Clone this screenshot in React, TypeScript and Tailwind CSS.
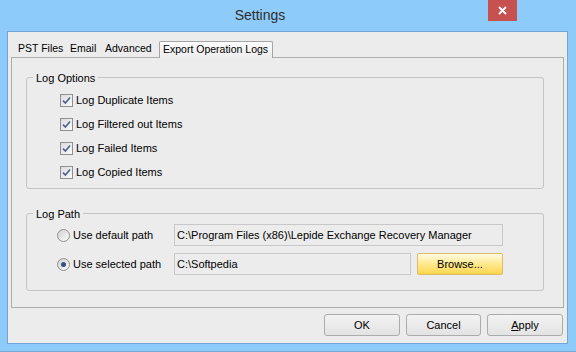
import { useState } from "react";

const CheckBox = ({ label }: { label: string }) => (
  <div className="flex items-center h-[24px]">
    <div className="w-[13px] h-[13px] border border-[#8f8f8f] bg-gradient-to-br from-[#dcdcdc] to-[#fafafa] flex items-center justify-center">
      <svg width="9" height="9" viewBox="0 0 9 9">
        <path d="M1 4.6 L3.4 7 L8 1.5" fill="none" stroke="#4c6190" strokeWidth="1.6" />
      </svg>
    </div>
    <span className="ml-[3px]">{label}</span>
  </div>
);

const Radio = ({ checked }: { checked: boolean }) => (
  <div className="w-[13px] h-[13px] rounded-full border border-[#8f8f8f] bg-gradient-to-br from-[#d2d2d2] to-[#fbfbfb] flex items-center justify-center">
    {checked && <div className="w-[5px] h-[5px] rounded-full bg-[#3a4e7c]" />}
  </div>
);

const Button = ({ children, w }: { children: React.ReactNode; w: string }) => (
  <div
    className={`${w} h-[22px] rounded-[3px] border border-[#acacac] bg-gradient-to-b from-[#f2f2f2] to-[#e3e3e3] flex items-center justify-center`}
  >
    {children}
  </div>
);

export default function App() {
  const [tab] = useState("Export Operation Logs");
  const tabs = [
    { name: "PST Files", w: "w-[52px]" },
    { name: "Email", w: "w-[35px]" },
    { name: "Advanced", w: "w-[55px]" },
    { name: "Export Operation Logs", w: "w-[114px]" },
  ];

  return (
    <div className="w-[576px] h-[352px] bg-[#8dcbfa] border-b border-[#74a9d8] flex flex-col font-['Liberation_Sans',sans-serif] text-[11px] text-black overflow-hidden">
      {/* Title bar */}
      <div className="h-[31px] flex relative">
        <div className="w-[520px] flex items-center justify-center text-[14px] text-[#2e2e2e] pb-[1px]">Settings</div>
        <div className="absolute right-[59px] top-0 w-[29px] h-[21px] bg-[#c75050] flex items-center justify-center">
          <svg width="9" height="9" viewBox="0 0 9 9">
            <path d="M1 1 L8 8 M8 1 L1 8" stroke="#fff" strokeWidth="1.8" />
          </svg>
        </div>
      </div>

      {/* Client area */}
      <div className="ml-[7px] mr-[8px] mb-[7px] flex-1 border border-[#72a6d6] bg-[#ececec] flex flex-col">
        {/* Tabs */}
        <div className="flex items-end pt-[9px] pl-[9px] text-[10.5px] whitespace-nowrap">
          {tabs.map((t) =>
            t.name === tab ? (
              <div
                key={t.name}
                className={`${t.w} h-[17px] -mb-px relative z-10 border border-b-0 border-[#a5a5a5] rounded-t-[2px] bg-gradient-to-b from-[#fdfdfd] to-[#ececec] flex items-center pl-[3px]`}
              >
                {t.name}
              </div>
            ) : (
              <div key={t.name} className={`${t.w} h-[16px] flex items-center pl-[1px]`}>
                {t.name}
              </div>
            )
          )}
        </div>

        {/* Tab panel */}
        <div className="mx-[3px] h-[251px] border border-[#adadad] bg-[#ececec] flex flex-col pl-[14px] pr-[19px]">
          {/* Log Options */}
          <div className="relative mt-[19px] h-[112px] border border-[#c4c4c4] rounded-[3px] pl-[33px] pt-[10px]">
            <span className="absolute -top-[8px] left-[6px] bg-[#ececec] px-[3px]">Log Options</span>
            <CheckBox label="Log Duplicate Items" />
            <CheckBox label="Log Filtered out Items" />
            <CheckBox label="Log Failed Items" />
            <CheckBox label="Log Copied Items" />
          </div>

          {/* Log Path */}
          <div className="relative mt-[24px] h-[78px] border border-[#c4c4c4] rounded-[3px] pl-[30px] pt-[10px] flex flex-col gap-[7px]">
            <span className="absolute -top-[8px] left-[6px] bg-[#ececec] px-[3px]">Log Path</span>
            <div className="flex items-center h-[22px]">
              <Radio checked={false} />
              <span className="ml-[3px] w-[101px]">Use default path</span>
              <div className="w-[329px] h-[22px] border border-[#c8c8c8] bg-[#ececec] flex items-center pl-[2px]">
                C:\Program Files (x86)\Lepide Exchange Recovery Manager
              </div>
            </div>
            <div className="flex items-center h-[22px]">
              <Radio checked={true} />
              <span className="ml-[3px] w-[101px]">Use selected path</span>
              <div className="w-[237px] h-[22px] border border-[#c8c8c8] bg-[#ececec] flex items-center pl-[2px]">
                C:\Softpedia
              </div>
              <div className="ml-[6px] w-[86px] h-[22px] rounded-[2px] border border-[#dcbc68] bg-gradient-to-b from-[#fffbe2] via-[#ffe98d] to-[#fdd54c] flex items-center justify-center">
                Browse...
              </div>
            </div>
          </div>
        </div>

        {/* Bottom buttons */}
        <div className="flex justify-end gap-[6px] mt-[6px] mr-[4px]">
          <Button w="w-[76px]">OK</Button>
          <Button w="w-[75px]">Cancel</Button>
          <Button w="w-[76px]">
            <span>
              <span className="underline">A</span>pply
            </span>
          </Button>
        </div>
      </div>
    </div>
  );
}
